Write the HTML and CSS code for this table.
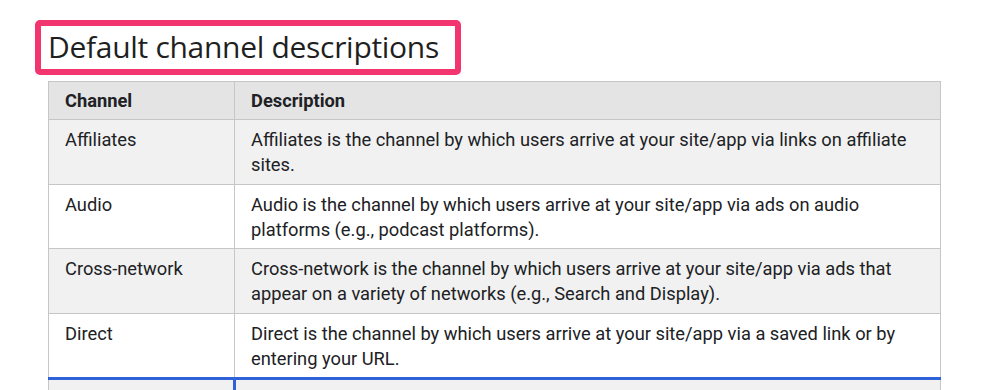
FILE: index.html
```html
<!DOCTYPE html>
<html lang="en">
  <head>
    <meta charset="UTF-8" />
    <meta name="viewport" content="width=device-width, initial-scale=1.0" />
    <title>Default channel descriptions</title>
    <link rel="stylesheet" href="styles.css">
  </head>
  <body>
    <div class="page">
      <h2 class="title-box">Default channel descriptions</h2>

      <table class="channels">
        <thead>
          <tr>
            <th class="col-channel">Channel</th>
            <th>Description</th>
          </tr>
        </thead>
        <tbody>
          <tr>
            <td>Affiliates</td>
            <td>Affiliates is the channel by which users arrive at your site/app via links on affiliate sites.</td>
          </tr>
          <tr>
            <td>Audio</td>
            <td>Audio is the channel by which users arrive at your site/app via ads on audio platforms (e.g., podcast platforms).</td>
          </tr>
          <tr>
            <td>Cross-network</td>
            <td>Cross-network is the channel by which users arrive at your site/app via ads that appear on a variety of networks (e.g., Search and Display).</td>
          </tr>
          <tr>
            <td>Direct</td>
            <td>Direct is the channel by which users arrive at your site/app via a saved link or by entering your URL.</td>
          </tr>
          <tr class="active">
            <td>Display</td>
            <td>Display is the channel by which users arrive at your site/app via display ads on the Google Display Network.</td>
          </tr>
        </tbody>
      </table>
    </div>
  </body>
</html>
```

FILE: styles.css
```css
body {
  margin: 0;
  padding: 0;
  background-color: #fff;
  color: #202124;
  font-family: Roboto, 'Liberation Sans', sans-serif;
  overflow: hidden;
}
.page {
  padding: 20px 0 0 35px;
}
.title-box {
  display: inline-block;
  margin: 0;
  padding: 0 16px 0 7px;
  height: 43px;
  border: 6px solid #f2356f;
  border-radius: 5px;
  font-family: 'Open Sans', Roboto, sans-serif;
  font-size: 30px;
  font-weight: 400;
  line-height: 41px;
  color: #1f1f1f;
  letter-spacing: -0.3px;
}
.channels {
  margin: 6px 0 0 13px;
  width: 893px;
  border-collapse: collapse;
  border: 1px solid #c6c6c6;
  font-size: 18.3px;
  line-height: 25px;
}
.channels th,
.channels td {
  border: 1px solid #c6c6c6;
  padding: 7px 16px 6.5px;
  text-align: left;
  vertical-align: top;
}
.channels th {
  background-color: #e4e4e4;
  font-weight: 700;
  padding-top: 6px;
  padding-bottom: 6px;
}
.col-channel {
  width: 153px;
}
.channels tbody tr:nth-child(odd) {
  background-color: #f1f1f1;
}
.channels tbody tr:nth-child(even) {
  background-color: #fff;
}
.channels tr.active td {
  border-top: 3px solid #2f62d8;
}
.channels tr.active td + td {
  border-left: 3px solid #2f62d8;
}
```
